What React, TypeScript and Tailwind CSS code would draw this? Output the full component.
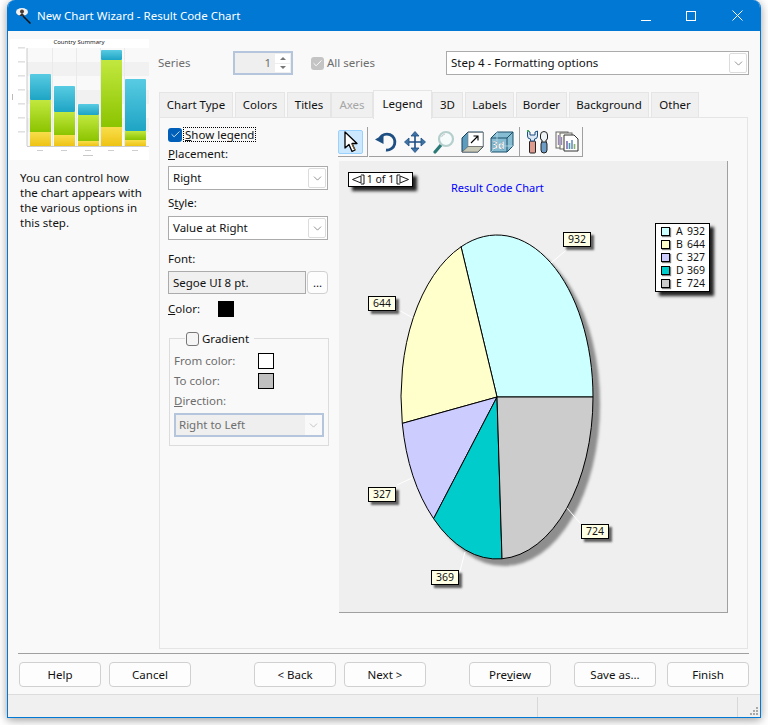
import { ChevronDown, Check } from 'lucide-react';

const FONT = "font-['Noto_Sans','Open_Sans',sans-serif]";

const tabs = [
  { label: 'Chart Type', w: 'w-[74px]', ml: 'ml-0' },
  { label: 'Colors', w: 'w-[50px]', ml: 'ml-[2px]' },
  { label: 'Titles', w: 'w-[44px]', ml: 'ml-[2px]' },
  { label: 'Axes', w: 'w-[42px]', ml: 'ml-0', disabled: true },
  { label: 'Legend', w: 'w-[59px]', ml: 'ml-0', active: true },
  { label: '3D', w: 'w-[31px]', ml: 'ml-0' },
  { label: 'Labels', w: 'w-[49px]', ml: 'ml-[2px]' },
  { label: 'Border', w: 'w-[51px]', ml: 'ml-[2px]' },
  { label: 'Background', w: 'w-[80px]', ml: 'ml-[2px]' },
  { label: 'Other', w: 'w-[48px]', ml: 'ml-[2px]' },
];

const slices = [
  { name: 'A', value: 932, color: '#ccffff' },
  { name: 'B', value: 644, color: '#ffffcc' },
  { name: 'C', value: 327, color: '#ccccff' },
  { name: 'D', value: 369, color: '#00cccc' },
  { name: 'E', value: 724, color: '#cccccc' },
];

const bars = [
  { x: 30, top: 74, blue: 100, green: 132 },
  { x: 54, top: 86, blue: 112, green: 135 },
  { x: 78, top: 104, blue: 115, green: 141 },
  { x: 101, top: 50, blue: 60, green: 127 },
  { x: 125, top: 79, blue: 131, green: 140 },
];

function Thumbnail() {
  return (
    <svg width="139" height="121" viewBox="10 39 139 121" className="block">
      <defs>
        <linearGradient id="gb" x1="0" y1="0" x2="0" y2="1">
          <stop offset="0" stopColor="#58cbe3" />
          <stop offset="1" stopColor="#1ea4c4" />
        </linearGradient>
        <linearGradient id="gg" x1="0" y1="0" x2="0" y2="1">
          <stop offset="0" stopColor="#c2e83f" />
          <stop offset="1" stopColor="#8bc400" />
        </linearGradient>
        <linearGradient id="gy" x1="0" y1="0" x2="0" y2="1">
          <stop offset="0" stopColor="#f8de4c" />
          <stop offset="1" stopColor="#eec313" />
        </linearGradient>
      </defs>
      <rect x="10" y="39" width="139" height="121" fill="#fff" />
      <text x="79" y="43.5" textAnchor="middle" fontSize="6" fill="#222">Country Summary</text>
      <rect x="27" y="48" width="122" height="98" fill="#f9f9f9" />
      {[62, 90, 118].map((y) => (
        <rect key={y} x="27" y={y} width="122" height="14" fill="#f1f1f1" />
      ))}
      {[52, 76, 100, 124].map((x) => (
        <rect key={x} x={x} y="48" width="1" height="98" fill="#eaeaea" />
      ))}
      <line x1="27" y1="48" x2="27" y2="146" stroke="#aaa" strokeWidth="0.6" />
      <line x1="27" y1="146.5" x2="149" y2="146.5" stroke="#aaa" strokeWidth="0.6" />
      {bars.map((b) => (
        <g key={b.x}>
          <rect x={b.x} y={b.top} width="21" height={b.blue - b.top} rx="1" fill="url(#gb)" />
          <rect x={b.x} y={b.blue} width="21" height={b.green - b.blue} fill="url(#gg)" />
          <rect x={b.x} y={b.green} width="21" height={146 - b.green} fill="url(#gy)" />
        </g>
      ))}
      {[48, 62, 76, 90, 104, 118, 132].map((y) => (
        <rect key={y} x="18" y={y - 0.5} width="7" height="0.8" fill="#c4c4c4" />
      ))}
      {[40, 64, 88, 111, 135].map((x) => (
        <rect key={x} x={x - 3} y="150" width="6" height="0.8" fill="#c4c4c4" />
      ))}
      <rect x="83" y="155" width="10" height="0.8" fill="#bbb" />
      <rect x="12" y="94" width="0.8" height="6" fill="#aaa" />
    </svg>
  );
}

function Combo({ value, className = '' }: { value: string; className?: string }) {
  return (
    <div className={`flex h-[24px] items-center justify-between border border-[#ababab] bg-white pl-[4px] pr-[1px] ${className}`}>
      <span>{value}</span>
      <span className="flex h-[20px] w-[18px] items-center justify-center rounded-[2px] border border-[#dcdcdc] bg-white">
        <ChevronDown className="h-[13px] w-[13px] text-[#606060]" strokeWidth={1.25} />
      </span>
    </div>
  );
}

function ActionButton({ children, className = '' }: { children: React.ReactNode; className?: string }) {
  return (
    <button className={`flex h-[25px] w-[82px] items-center justify-center rounded-[4px] border border-[#d0d0d0] bg-[#fdfdfd] text-[11.5px] text-[#111] ${className}`}>
      {children}
    </button>
  );
}

function Swatch({ className }: { className: string }) {
  return <span className={`block h-[16px] w-[16px] border border-black ${className}`} />;
}

function ArrowIcon() {
  return (
    <svg width="20" height="22" viewBox="0 0 20 22">
      <path d="M4 1 L4 17 L8 13.5 L11 20.5 L14 19 L11 12.5 L16 12.5 Z" fill="#fff" stroke="#000" strokeWidth="1.3" strokeLinejoin="round" />
      <path d="M11 13 L14 19" stroke="#7b5a2a" strokeWidth="1.2" />
    </svg>
  );
}

function UndoIcon() {
  return (
    <svg width="24" height="24" viewBox="0 0 24 24">
      <path d="M6 8 A8 8 0 1 1 12 20" fill="none" stroke="#1d4f83" strokeWidth="2.8" />
      <path d="M1 9.5 L9.5 4.5 L9.5 14 Z" fill="#1d4f83" />
    </svg>
  );
}

function MoveIcon() {
  return (
    <svg width="24" height="24" viewBox="0 0 24 24">
      <path d="M12 5 V19 M5 12 H19" stroke="#1d4f83" strokeWidth="1.6" />
      <path d="M12 1.5 L16 6 H8 Z M12 22.5 L16 18 H8 Z M1.5 12 L6 8 V16 Z M22.5 12 L18 8 V16 Z" fill="#3f73a6" stroke="#1d4f83" strokeWidth="0.8" strokeLinejoin="round" />
    </svg>
  );
}

function LensIcon() {
  return (
    <svg width="24" height="24" viewBox="0 0 24 24">
      <path d="M9 15 L3 22" stroke="#2c7a78" strokeWidth="3.2" strokeLinecap="round" />
      <circle cx="14" cy="9" r="7" fill="#f6fbfb" stroke="#b5cfcd" strokeWidth="2.2" />
      <path d="M9.5 7 A5 5 0 0 1 13 4" stroke="#c8c8c8" fill="none" />
    </svg>
  );
}

function BoxIcon() {
  return (
    <svg width="24" height="24" viewBox="0 0 24 24">
      <path d="M1 8 L7 2 H22 V17 L17 22 H1 Z" fill="#5d9cbc" stroke="#15405c" strokeWidth="1" />
      <rect x="7" y="2.5" width="15" height="14" fill="#fff" stroke="#777" strokeWidth="0.6" />
      <path d="M10 13 L17 6 M12.5 6 H17 V10.5" stroke="#000" strokeWidth="1.1" fill="none" />
      <path d="M7 16.5 H22 L17 22 H1 Z" fill="#c9c9b8" stroke="#555" strokeWidth="0.6" />
    </svg>
  );
}

function CubeIcon() {
  return (
    <svg width="24" height="24" viewBox="0 0 24 24">
      <path d="M1 8 L7 2 H23 V16 L17 22 H1 Z" fill="#86bdd3" stroke="#1d4f6b" strokeWidth="1" />
      <path d="M1 8 H17 V22 M17 8 L23 2" stroke="#1d4f6b" strokeWidth="1" fill="none" />
      <path d="M7 2 V16 H23 M7 16 L1 22" stroke="#b9dbe8" strokeWidth="0.8" fill="none" />
      <text x="1.5" y="19" fontSize="11" fontWeight="700" fill="#fff" stroke="#1d4f6b" strokeWidth="0.25">3d</text>
    </svg>
  );
}

function ToolsIcon() {
  return (
    <svg width="24" height="24" viewBox="0 0 24 24">
      <rect x="3.5" y="11" width="6" height="12" rx="1" fill="#dd9a8e" stroke="#222" strokeWidth="1" />
      <path d="M1.5 1 V6 Q1.5 9 4.5 9 V11 H8.5 V9 Q11.5 9 11.5 6 V1 L9 2 V5 H4 V2 Z" fill="#dce9f5" stroke="#1d4f83" strokeWidth="1" />
      <rect x="15" y="11" width="6" height="12" rx="3" fill="#6d9cc4" stroke="#222" strokeWidth="1" />
      <path d="M14.5 5 A3.5 3.5 0 0 1 21.5 5 V8 Q21.5 10 20 10 V12 H16 V10 Q14.5 10 14.5 8 Z" fill="#eef3f8" stroke="#222" strokeWidth="1" />
      <rect x="1" y="0" width="2" height="2" fill="#3cae55" />
    </svg>
  );
}

function PagesIcon() {
  return (
    <svg width="24" height="24" viewBox="0 0 24 24">
      <rect x="1" y="2" width="12" height="16" fill="#fbfbf1" stroke="#666" />
      <rect x="5" y="3" width="12" height="16" fill="#fbfbf1" stroke="#666" />
      <path d="M9 5 H19 L23 9 V21 H9 Z" fill="#fff" stroke="#333" />
      <path d="M12 11 V19" strokeWidth="1.6" stroke="#7a6cb2" />
      <path d="M14.5 13 V19" strokeWidth="1.6" stroke="#4c9aa8" />
      <path d="M17 10 V19" strokeWidth="1.6" stroke="#6a8fbe" />
      <path d="M19.5 14 V19" strokeWidth="1.6" stroke="#8bb26a" />
      <path d="M3.5 5 V15 M6.5 7 V15" strokeWidth="1.4" stroke="#9a85bf" />
    </svg>
  );
}

function Pie() {
  const cx = 158;
  const cy = 236;
  const rx = 96;
  const ry = 162;
  const total = slices.reduce((sum, s) => sum + s.value, 0);
  let angle = 0;
  const paths = slices.map((s) => {
    const start = angle;
    angle += (s.value / total) * Math.PI * 2;
    const x1 = cx + Math.cos(start) * rx;
    const y1 = cy - Math.sin(start) * ry;
    const x2 = cx + Math.cos(angle) * rx;
    const y2 = cy - Math.sin(angle) * ry;
    const large = angle - start > Math.PI ? 1 : 0;
    return { d: `M${cx} ${cy} L${x1} ${y1} A${rx} ${ry} 0 ${large} 0 ${x2} ${y2} Z`, color: s.color };
  });
  return (
    <svg width="388" height="451" viewBox="0 0 388 451" className="absolute left-0 top-0">
      <defs>
        <filter id="soft" x="-10%" y="-10%" width="120%" height="120%">
          <feGaussianBlur stdDeviation="1.5" />
        </filter>
      </defs>
      <ellipse cx={cx + 7} cy={cy + 7} rx={rx} ry={ry} fill="#8e8e8e" filter="url(#soft)" />
      <g stroke="#fff" strokeWidth="1">
        <line x1="212" y1="102" x2="231" y2="86" />
        <line x1="56" y1="147" x2="74" y2="157" />
        <line x1="58" y1="324" x2="73" y2="317" />
        <line x1="126" y1="391" x2="121" y2="410" />
        <line x1="228" y1="347" x2="241" y2="362" />
      </g>
      {paths.map((p) => (
        <path key={p.color} d={p.d} fill={p.color} stroke="#000" strokeWidth="1" />
      ))}
    </svg>
  );
}

function PieLabel({ value, className }: { value: number; className: string }) {
  return (
    <span className={`absolute flex h-[15px] w-[28px] items-center justify-center border border-black bg-[#ffffe6] text-[10.5px] leading-none shadow-[3px_3px_2px_rgba(0,0,0,0.6)] ${className}`}>
      {value}
    </span>
  );
}

function NavArrow({ flip }: { flip?: boolean }) {
  return (
    <svg width="14" height="11" viewBox="0 0 14 11" className={flip ? 'rotate-180' : ''}>
      <path d="M0.5 5.5 L9 2 V9 Z" fill="#fff" stroke="#000" strokeWidth="0.9" />
      <path d="M9 1 H12 V10 H9" fill="none" stroke="#000" strokeWidth="0.9" />
    </svg>
  );
}

export default function App() {
  return (
    <div className={`h-[725px] w-[768px] overflow-hidden bg-white pb-[7px] pl-[7px] pr-[7px] text-[11.5px] leading-[16px] text-[#111] ${FONT}`}>
      <div className="flex h-[718px] w-[754px] flex-col overflow-hidden rounded-t-[8px] border-x border-b border-[#0078d4] bg-[#f9f9f9] shadow-[0_2px_10px_rgba(0,0,0,0.4)]">
        {/* Title bar */}
        <div className="flex h-[31px] shrink-0 items-center bg-[#0078d4] pl-[7px] text-white">
          <svg width="17" height="17" viewBox="0 0 17 17">
            <path d="M8 9 L15.5 16.5" stroke="#111" strokeWidth="1.5" />
            <ellipse cx="7" cy="5" rx="6" ry="4" fill="#f2f2f2" />
            <circle cx="7" cy="4.5" r="2" fill="#4a3a34" />
            <path d="M4 9 L7 6 L10 9 Z" fill="#333" />
          </svg>
          <span className="ml-[5px]">New Chart Wizard - Result Code Chart</span>
          <div className="ml-auto flex items-center">
            <span className="mr-[35px] mt-[9px] block h-px w-[10px] bg-white" />
            <span className="mr-[36px] block h-[10px] w-[10px] border border-white" />
            <svg width="11" height="11" viewBox="0 0 11 11" className="mr-[17px]">
              <path d="M0.5 0.5 L10.5 10.5 M10.5 0.5 L0.5 10.5" stroke="#fff" strokeWidth="1" />
            </svg>
          </div>
        </div>

        <div className="flex">
          {/* Left column */}
          <div className="w-[150px] shrink-0 pl-[2px] pt-[8px]">
            <Thumbnail />
            <p className="ml-[10px] mt-[10px] w-[125px] leading-[15px]">
              You can control how the chart appears with the various options in this step.
            </p>
          </div>

          {/* Right column */}
          <div className="w-[592px]">
            <div className="mt-[20px] flex h-[24px] items-center">
              <span className="w-[75px] text-[#6d6d6d]">Series</span>
              <div className="flex h-[24px] w-[60px] items-center justify-end border-2 border-[#b4c5dc] bg-[#efefef] pr-[1px] text-[#6d6d6d]">
                <span className="mr-[4px]">1</span>
                <div className="flex h-[18px] w-[15px] flex-col gap-px">
                  <span className="flex flex-1 items-center justify-center bg-white">
                    <span className="h-0 w-0 border-x-[3px] border-b-[3px] border-x-transparent border-b-[#777]" />
                  </span>
                  <span className="flex flex-1 items-center justify-center bg-white">
                    <span className="h-0 w-0 border-x-[3px] border-t-[3px] border-x-transparent border-t-[#777]" />
                  </span>
                </div>
              </div>
              <span className="ml-[18px] flex h-[13px] w-[13px] items-center justify-center rounded-[3px] bg-[#c4c4c4]">
                <Check className="h-[11px] w-[11px] text-white" strokeWidth={2} />
              </span>
              <span className="ml-[3px] text-[#6d6d6d]">All series</span>
              <Combo value="Step 4 - Formatting options" className="ml-auto mr-[1px] w-[303px]" />
            </div>

            {/* Tabs */}
            <div className="ml-[1px] mt-[15px] flex h-[28px] items-end">
              {tabs.map((t) => (
                <div
                  key={t.label}
                  className={`flex items-center justify-center border border-[#e5e5e5] ${t.w} ${t.ml} ${
                    t.active
                      ? 'z-10 -mb-px h-[29px] border-b-0 bg-[#f9f9f9] pb-[3px]'
                      : 'h-[26px] bg-[#f0f0f0]'
                  } ${t.disabled ? 'text-[#a6a6a6]' : ''}`}
                >
                  {t.label}
                </div>
              ))}
            </div>

            {/* Tab panel */}
            <div className="-mt-px ml-[1px] flex h-[532px] w-[589px] border border-[#e5e5e5] pl-[8px] pt-[9px]">
              <div className="w-[162px] shrink-0">
                <div className="flex h-[15px] items-center">
                  <span className="flex h-[14px] w-[14px] items-center justify-center rounded-[3px] bg-[#005fb8]">
                    <Check className="h-[11px] w-[11px] text-white" strokeWidth={1.75} />
                  </span>
                  <span className="ml-px border border-dotted border-black px-px leading-[13px]">
                    <u>S</u>how legend
                  </span>
                </div>
                <div className="mt-[4px]"><u>P</u>lacement:</div>
                <Combo value="Right" className="mt-[4px] w-[160px]" />
                <div className="mt-[5px]">S<u>t</u>yle:</div>
                <Combo value="Value at Right" className="mt-[5px] w-[160px]" />
                <div className="mt-[11px]">Font:</div>
                <div className="mt-[4px] flex h-[23px] items-center">
                  <div className="flex h-[23px] w-[138px] items-center border border-[#ababab] bg-[#f0f0f0] pl-[4px]">
                    Segoe UI 8 pt.
                  </div>
                  <button className="ml-[1px] h-[23px] w-[21px] rounded-[4px] border border-[#d0d0d0] bg-[#fdfdfd] leading-[18px]">...</button>
                </div>
                <div className="mt-[7px] flex h-[16px] items-center">
                  <span className="w-[50px]"><u>C</u>olor:</span>
                  <span className="block h-[16px] w-[16px] bg-black" />
                </div>

                {/* Gradient group */}
                <div className="relative ml-[1px] mt-[21px] h-[108px] w-[160px] border border-[#dcdcdc] px-[4px] pt-[14px] text-[#6d6d6d]">
                  <div className="absolute -top-[8px] left-[15px] flex items-center bg-[#f9f9f9] px-px text-[#111]">
                    <span className="h-[14px] w-[13px] rounded-[3px] border border-[#777] bg-[#f5f5f5]" />
                    <span className="ml-[3px] mr-[4px]">Gradient</span>
                  </div>
                  <div className="flex h-[16px] items-center justify-between pr-[50px]">
                    <span>From color:</span>
                    <Swatch className="bg-white" />
                  </div>
                  <div className="mt-[4px] flex h-[16px] items-center justify-between pr-[50px]">
                    <span>To color:</span>
                    <Swatch className="bg-[#c0c0c0]" />
                  </div>
                  <div className="mt-[4px]"><u>D</u>irection:</div>
                  <div className="mt-[4px] flex h-[24px] w-[150px] items-center justify-between border-2 border-[#b4c5dc] bg-[#efefef] pl-[3px] pr-0">
                    <span>Right to Left</span>
                    <span className="flex h-[20px] w-[17px] items-center justify-center bg-[#f9f9f9]">
                      <ChevronDown className="h-[13px] w-[13px] text-[#aaa]" strokeWidth={1.25} />
                    </span>
                  </div>
                </div>
              </div>

              {/* Chart column */}
              <div className="ml-[8px]">
                <div className="flex h-[30px]">
                  <div className="flex h-[30px] w-[30px] items-start border-b border-r border-[#a0a0a0] pt-[3px]">
                    <span className="flex h-[24px] w-[25px] items-center justify-center rounded-[2px] border border-[#99d1ff] bg-[#cce8ff]">
                      <ArrowIcon />
                    </span>
                  </div>
                  <div className="ml-[1px] flex h-[30px] w-[151px] items-center border-b border-r border-[#a0a0a0] pl-[2px]">
                    {[UndoIcon, MoveIcon, LensIcon, BoxIcon, CubeIcon].map((Icon, i) => (
                      <span key={i} className="flex w-[29px] justify-center"><Icon /></span>
                    ))}
                  </div>
                  <div className="flex h-[30px] w-[63px] items-center border-b border-r border-[#a0a0a0] pl-[3px]">
                    <span className="flex w-[29px] justify-center"><ToolsIcon /></span>
                    <span className="flex w-[29px] justify-center"><PagesIcon /></span>
                  </div>
                </div>

                {/* Chart canvas */}
                <div className="relative ml-[1px] mt-[4px] h-[452px] w-[389px] overflow-hidden border-b border-r border-[#a0a0a0] bg-[#efefef] text-[10.5px] leading-[13px]">
                  <Pie />
                  <div className="absolute left-[9px] top-[11px] flex h-[15px] w-[65px] items-center justify-between border border-black bg-white px-[3px] shadow-[4px_4px_3px_rgba(0,0,0,0.85)]">
                    <NavArrow />
                    <span>1 of 1</span>
                    <NavArrow flip />
                  </div>
                  <div className="absolute left-[112px] top-[20px] text-[11px] text-[#0000ff]">Result Code Chart</div>
                  <PieLabel value={932} className="left-[224px] top-[71px]" />
                  <PieLabel value={644} className="left-[29px] top-[135px]" />
                  <PieLabel value={327} className="left-[29px] top-[326px]" />
                  <PieLabel value={369} className="left-[92px] top-[409px]" />
                  <PieLabel value={724} className="left-[242px] top-[363px]" />
                  <div className="absolute left-[316px] top-[62px] flex h-[69px] w-[55px] flex-col justify-center border border-black bg-white pl-[5px] shadow-[4px_4px_3px_rgba(0,0,0,0.85)]">
                    {slices.map((s) => (
                      <div key={s.name} className="flex items-center">
                        <span
                          className="h-[9px] w-[9px] border border-black shadow-[1px_1px_1px_rgba(0,0,0,0.5)]"
                          style={{ backgroundColor: s.color }}
                        />
                        <span className="ml-[6px] w-[11px]">{s.name}</span>
                        <span>{s.value}</span>
                      </div>
                    ))}
                  </div>
                </div>
              </div>
            </div>
          </div>
        </div>

        {/* Footer */}
        <div className="ml-[10px] mt-[4px] h-px w-[731px] bg-[#a0a0a0]" />
        <div className="ml-[11px] mt-[8px] flex">
          <ActionButton>Help</ActionButton>
          <ActionButton className="ml-[8px]">Cancel</ActionButton>
          <ActionButton className="ml-[63px]">&lt; Back</ActionButton>
          <ActionButton className="ml-[8px]">Next &gt;</ActionButton>
          <ActionButton className="ml-[43px]">Pre<u>v</u>iew</ActionButton>
          <ActionButton className="ml-[23px]">Save as...</ActionButton>
          <ActionButton className="ml-[11px]">Finish</ActionButton>
        </div>

        {/* Status bar */}
        <div className="relative mt-[7px] flex flex-1 items-stretch border-t border-[#dcdcdc] bg-[#f0f0f0] pt-[2px]">
          <div className="w-[530px] border-r border-[#d8d8d8]" />
          <div className="w-[200px] border-r border-[#d8d8d8]" />
          <svg width="8" height="8" viewBox="0 0 8 8" className="absolute bottom-[2px] right-[2px]">
            <g fill="#a8a8a8">
              <rect x="6" y="0" width="2" height="2" />
              <rect x="3" y="3" width="2" height="2" />
              <rect x="6" y="3" width="2" height="2" />
              <rect x="0" y="6" width="2" height="2" />
              <rect x="3" y="6" width="2" height="2" />
              <rect x="6" y="6" width="2" height="2" />
            </g>
          </svg>
        </div>
      </div>
    </div>
  );
}
